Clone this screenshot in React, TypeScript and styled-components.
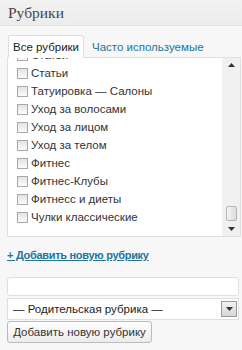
import React from "react";
import styled, { createGlobalStyle } from "styled-components";

const Global = createGlobalStyle`
  html, body { margin: 0; padding: 0; background: #f7f7f7; }
  body { font-family: "Liberation Sans", Arial, sans-serif; font-size: 11px; color: #333; }
`;

const Panel = styled.div`
  width: 242px;
  height: 350px;
  background: #f7f7f7;
  overflow: hidden;
`;

const Header = styled.div`
  height: 25px;
  border-bottom: 1px solid #e3e3e3;
  background: linear-gradient(#f2f2f2, #ececec);
  display: flex;
  align-items: center;
  padding-left: 8px;
  font-family: "Liberation Serif", Georgia, serif;
  font-size: 15.5px;
  color: #464646;
`;

const Body = styled.div`
  padding: 9px 1px 0 7px;
  display: flex;
  flex-direction: column;
`;

const Tabs = styled.div`
  display: flex;
  align-items: flex-end;
  height: 23px;
  margin-bottom: -1px;
  position: relative;
  z-index: 1;
`;

const Tab = styled.div<{ $active?: boolean }>`
  box-sizing: border-box;
  display: flex;
  align-items: center;
  white-space: nowrap;
  font-size: 11.5px;
  ${(p) =>
    p.$active
      ? `background:#fff;border:1px solid #dfdfdf;border-bottom-color:#fff;border-radius:3px 3px 0 0;color:#222;height:23px;padding:0 4px 0 4px;margin-left:1px;`
      : `color:#21759b;height:22px;padding:0;margin-left:8px;`}
`;

const ListBox = styled.div`
  height: 178px;
  border: 1px solid #dfdfdf;
  background: #fff;
  display: flex;
  overflow: hidden;
`;

const ListScroll = styled.div`
  flex: 1;
  overflow: hidden;
`;

const List = styled.ul`
  list-style: none;
  margin: -12px 0 0 0;
  padding: 0 0 0 9px;
`;

const Item = styled.li`
  height: 18px;
  display: flex;
  align-items: center;
  gap: 3px;
  color: #333;
  font-size: 11.5px;
  white-space: nowrap;
`;

const Check = styled.span`
  width: 11px;
  height: 11px;
  box-sizing: border-box;
  border: 1px solid #a8a8a8;
  background: linear-gradient(#e4e4e4, #fafafa);
  flex: none;
`;

const Scrollbar = styled.div`
  width: 17px;
  background: #f0f0f0;
  border-left: 1px solid #f4f4f4;
  display: flex;
  flex-direction: column;
  align-items: center;
`;

const Arrow = styled.div`
  height: 14px;
  display: flex;
  align-items: center;
  justify-content: center;
`;

const Track = styled.div`
  flex: 1;
  display: flex;
  flex-direction: column;
  justify-content: flex-end;
  align-items: center;
  padding-bottom: 1px;
`;

const Thumb = styled.div`
  width: 11px;
  height: 15px;
  box-sizing: border-box;
  border: 1px solid #b5b5b5;
  border-radius: 2px;
  background: linear-gradient(90deg, #f4f4f4, #dcdcdc);
`;

const AddLink = styled.a`
  margin-top: 11px;
  align-self: flex-start;
  font-weight: bold;
  color: #21759b;
  text-decoration: underline;
  font-size: 11px;
  letter-spacing: -0.3px;
  line-height: 14px;
`;

const Input = styled.div`
  margin-top: 15px;
  width: 232px;
  height: 19px;
  box-sizing: border-box;
  border: 1px solid #dfdfdf;
  border-radius: 3px;
  background: #fff;
`;

const Select = styled.div`
  margin-top: 2px;
  width: 232px;
  height: 22px;
  box-sizing: border-box;
  border: 1px solid #dfdfdf;
  background: #fff;
  display: flex;
  align-items: center;
  justify-content: space-between;
  padding: 0 1px 0 5px;
  font-size: 11.5px;
  color: #222;
`;

const SelectBtn = styled.div`
  width: 16px;
  height: 16px;
  box-sizing: border-box;
  border: 1px solid #9a9a9a;
  background: linear-gradient(#f2f2f2, #d6d6d6);
  display: flex;
  align-items: center;
  justify-content: center;
`;

const Button = styled.button`
  margin-top: 1px;
  align-self: flex-start;
  width: 145px;
  height: 22px;
  box-sizing: border-box;
  border: 1px solid #bbb;
  border-radius: 3px;
  background: linear-gradient(#fefefe, #ececec);
  font-family: "Liberation Sans", Arial, sans-serif;
  font-size: 11.5px;
  color: #333;
  padding: 0;
`;

const items = [
  "Статьи",
  "Статьи",
  "Татуировка — Салоны",
  "Уход за волосами",
  "Уход за лицом",
  "Уход за телом",
  "Фитнес",
  "Фитнес-Клубы",
  "Фитнесс и диеты",
  "Чулки классические",
];

const Tri = ({ up }: { up?: boolean }) => (
  <svg width="7" height="4" viewBox="0 0 7 4">
    <path d={up ? "M0 4 L3.5 0 L7 4 Z" : "M0 0 L7 0 L3.5 4 Z"} fill="#333" />
  </svg>
);

export default function App() {
  return (
    <Panel>
      <Global />
      <Header>Рубрики</Header>
      <Body>
        <Tabs>
          <Tab $active>Все рубрики</Tab>
          <Tab>Часто используемые</Tab>
        </Tabs>
        <ListBox>
          <ListScroll>
            <List>
              {items.map((t, i) => (
                <Item key={i}>
                  <Check />
                  {t}
                </Item>
              ))}
            </List>
          </ListScroll>
          <Scrollbar>
            <Arrow>
              <Tri up />
            </Arrow>
            <Track>
              <Thumb />
            </Track>
            <Arrow>
              <Tri />
            </Arrow>
          </Scrollbar>
        </ListBox>
        <AddLink>+ Добавить новую рубрику</AddLink>
        <Input />
        <Select>
          — Родительская рубрика —
          <SelectBtn>
            <Tri />
          </SelectBtn>
        </Select>
        <Button>Добавить новую рубрику</Button>
      </Body>
    </Panel>
  );
}
